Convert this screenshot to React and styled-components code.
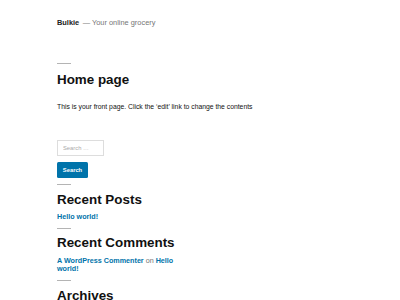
import React from 'react';
import styled, { createGlobalStyle } from 'styled-components';

const GlobalStyle = createGlobalStyle`
  body {
    margin: 0;
    background: #fff;
    font-family: "Liberation Sans", Arial, sans-serif;
    color: #111;
  }
`

const Page = styled.div`
  padding: 19.4px 0 0 57px;
  width: 343px;
  height: 300px;
  overflow: hidden;
  box-sizing: border-box;
`

const Branding = styled.div`
  display: flex;
  align-items: baseline;
  gap: 3.5px;
  font-size: 7.4px;
  line-height: 8px;
`

const SiteTitle = styled.span`
  font-weight: 600;
  color: #222;
`

const SiteDesc = styled.span`
  color: #767676;
`

const Rule = styled.div`
  width: 14px;
  height: 1px;
  background: #b4b4b4;
  margin-top: ${props => props.$top}px;
`

const Heading = styled.h2`
  margin: ${props => props.$top}px 0 0;
  font-size: 13.4px;
  line-height: 13.4px;
  font-weight: 700;
  color: #111;
`

const Entry = styled.p`
  margin: 16px 0 0;
  font-size: 6.8px;
  line-height: 10px;
  color: #111;
`

const SearchForm = styled.form`
  display: flex;
  flex-direction: column;
  align-items: flex-start;
  gap: 6px;
  margin-top: 28px;
`

const SearchInput = styled.input`
  box-sizing: border-box;
  width: 47px;
  height: 16px;
  margin: 0;
  padding: 0 5px;
  border: 1px solid #ddd;
  border-radius: 0;
  font-family: "Liberation Sans", Arial, sans-serif;
  font-size: 5.8px;
  color: #111;
  outline: none;

  &::placeholder {
    color: #aaa;
  }
`

const SearchButton = styled.button`
  box-sizing: border-box;
  width: 31px;
  height: 16px;
  margin: 0;
  padding: 0;
  border: none;
  border-radius: 1.5px;
  background: #0073aa;
  color: #fff;
  font-family: "Liberation Sans", Arial, sans-serif;
  font-size: 5.8px;
  font-weight: 700;
`

const Widget = styled.div`
  width: 125px;
  margin-top: 7.3px;
  font-size: 7.2px;
  line-height: 8.3px;
  font-weight: 700;
  color: #767676;
`

const Link = styled.a`
  color: #0073aa;
  text-decoration: none;
`

const Plain = styled.span`
  font-weight: 400;
`

const App = () => {
  return (
    <Page>
      <GlobalStyle />
      <Branding>
        <SiteTitle>Bulkie</SiteTitle>
        <SiteDesc>— Your online grocery</SiteDesc>
      </Branding>

      <Rule $top={35.6} />
      <Heading as="h1" $top={8.6}>Home page</Heading>
      <Entry>This is your front page. Click the ‘edit’ link to change the contents</Entry>

      <SearchForm onSubmit={e => e.preventDefault()}>
        <SearchInput placeholder="Search …" />
        <SearchButton>Search</SearchButton>
      </SearchForm>

      <Rule $top={6} />
      <Heading $top={7.6}>Recent Posts</Heading>
      <Widget>
        <Link href="#">Hello world!</Link>
      </Widget>

      <Rule $top={6} />
      <Heading $top={7.6}>Recent Comments</Heading>
      <Widget>
        <Link href="#">A WordPress Commenter</Link> <Plain>on</Plain> <Link href="#">Hello world!</Link>
      </Widget>

      <Rule $top={6.5} />
      <Heading $top={7.8}>Archives</Heading>
    </Page>
  );
}

export default App;
